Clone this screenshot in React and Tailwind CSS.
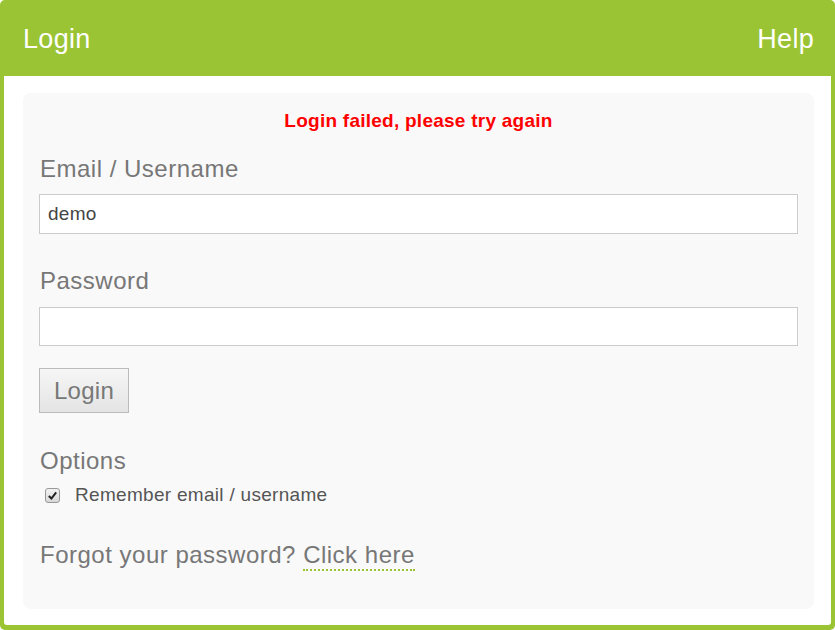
export default function App() {
  return (
    <div className="w-[835px] h-[630px] bg-white font-['Liberation_Sans',Arial,sans-serif]">
      <div className="flex flex-col h-full rounded-[5px] bg-[#9bc434] overflow-hidden">
        {/* Header */}
        <div className="h-[76px] flex items-center justify-between pl-[23px] pr-[21px] pt-[3px] text-white text-[27px] tracking-[0.3px]">
          <span>Login</span>
          <span>Help</span>
        </div>

        {/* Body */}
        <div className="flex-1 mx-[4px] mb-[5px] rounded-b-[3px] bg-white pt-[17px] pl-[19px] pr-[17px] pb-[16px]">
          <div className="h-full rounded-[8px] bg-[#f9f9f9] pl-[16px] pr-[16px] pt-[16px]">
            <p className="text-center text-[19px] font-bold text-[#ff0000] leading-[24px] tracking-[0.25px]">
              Login failed, please try again
            </p>

            <div className="mt-[22px] text-[24px] text-[#777] leading-[28px] tracking-[0.5px] pl-[1px]">Email / Username</div>
            <input
              className="mt-[11px] block w-full h-[40px] border border-[#ccc] bg-white px-[8px] text-[19px] tracking-[0.3px] text-[#444] outline-none"
              defaultValue="demo"
            />

            <div className="mt-[33px] text-[24px] text-[#777] leading-[28px] tracking-[0.5px] pl-[1px]">Password</div>
            <input
              type="password"
              className="mt-[12px] block w-full h-[39px] border border-[#ccc] bg-white px-[8px] text-[18px] outline-none"
            />

            <button className="mt-[22px] block w-[90px] h-[45px] border border-[#bbb] bg-gradient-to-b from-[#f6f6f6] to-[#e4e4e4] text-[24px] tracking-[0.3px] text-[#777]">
              Login
            </button>

            <div className="mt-[34px] text-[24px] text-[#777] leading-[28px] tracking-[0.5px] pl-[1px]">Options</div>
            <label className="mt-[6px] flex items-center text-[19px] tracking-[0.3px] text-[#555] pl-[6px]">
              <span className="w-[15px] h-[15px] rounded-[3px] border border-[#999] bg-gradient-to-b from-[#f3f3f3] to-[#d8d8d8] flex items-center justify-center">
                <svg width="11" height="11" viewBox="0 0 12 12">
                  <path d="M2 6.5 L4.8 9.3 L10 2.5" fill="none" stroke="#222" strokeWidth="2.2" />
                </svg>
              </span>
              <span className="ml-[15px]">Remember email / username</span>
            </label>

            <div className="mt-[31px] text-[24px] text-[#777] leading-[28px] tracking-[0.5px] pl-[1px]">
              Forgot your password?{" "}
              <a className="text-[#777] border-b-2 border-dotted border-[#9bc434] pb-[1px]">Click here</a>
            </div>
          </div>
        </div>
      </div>
    </div>
  );
}
